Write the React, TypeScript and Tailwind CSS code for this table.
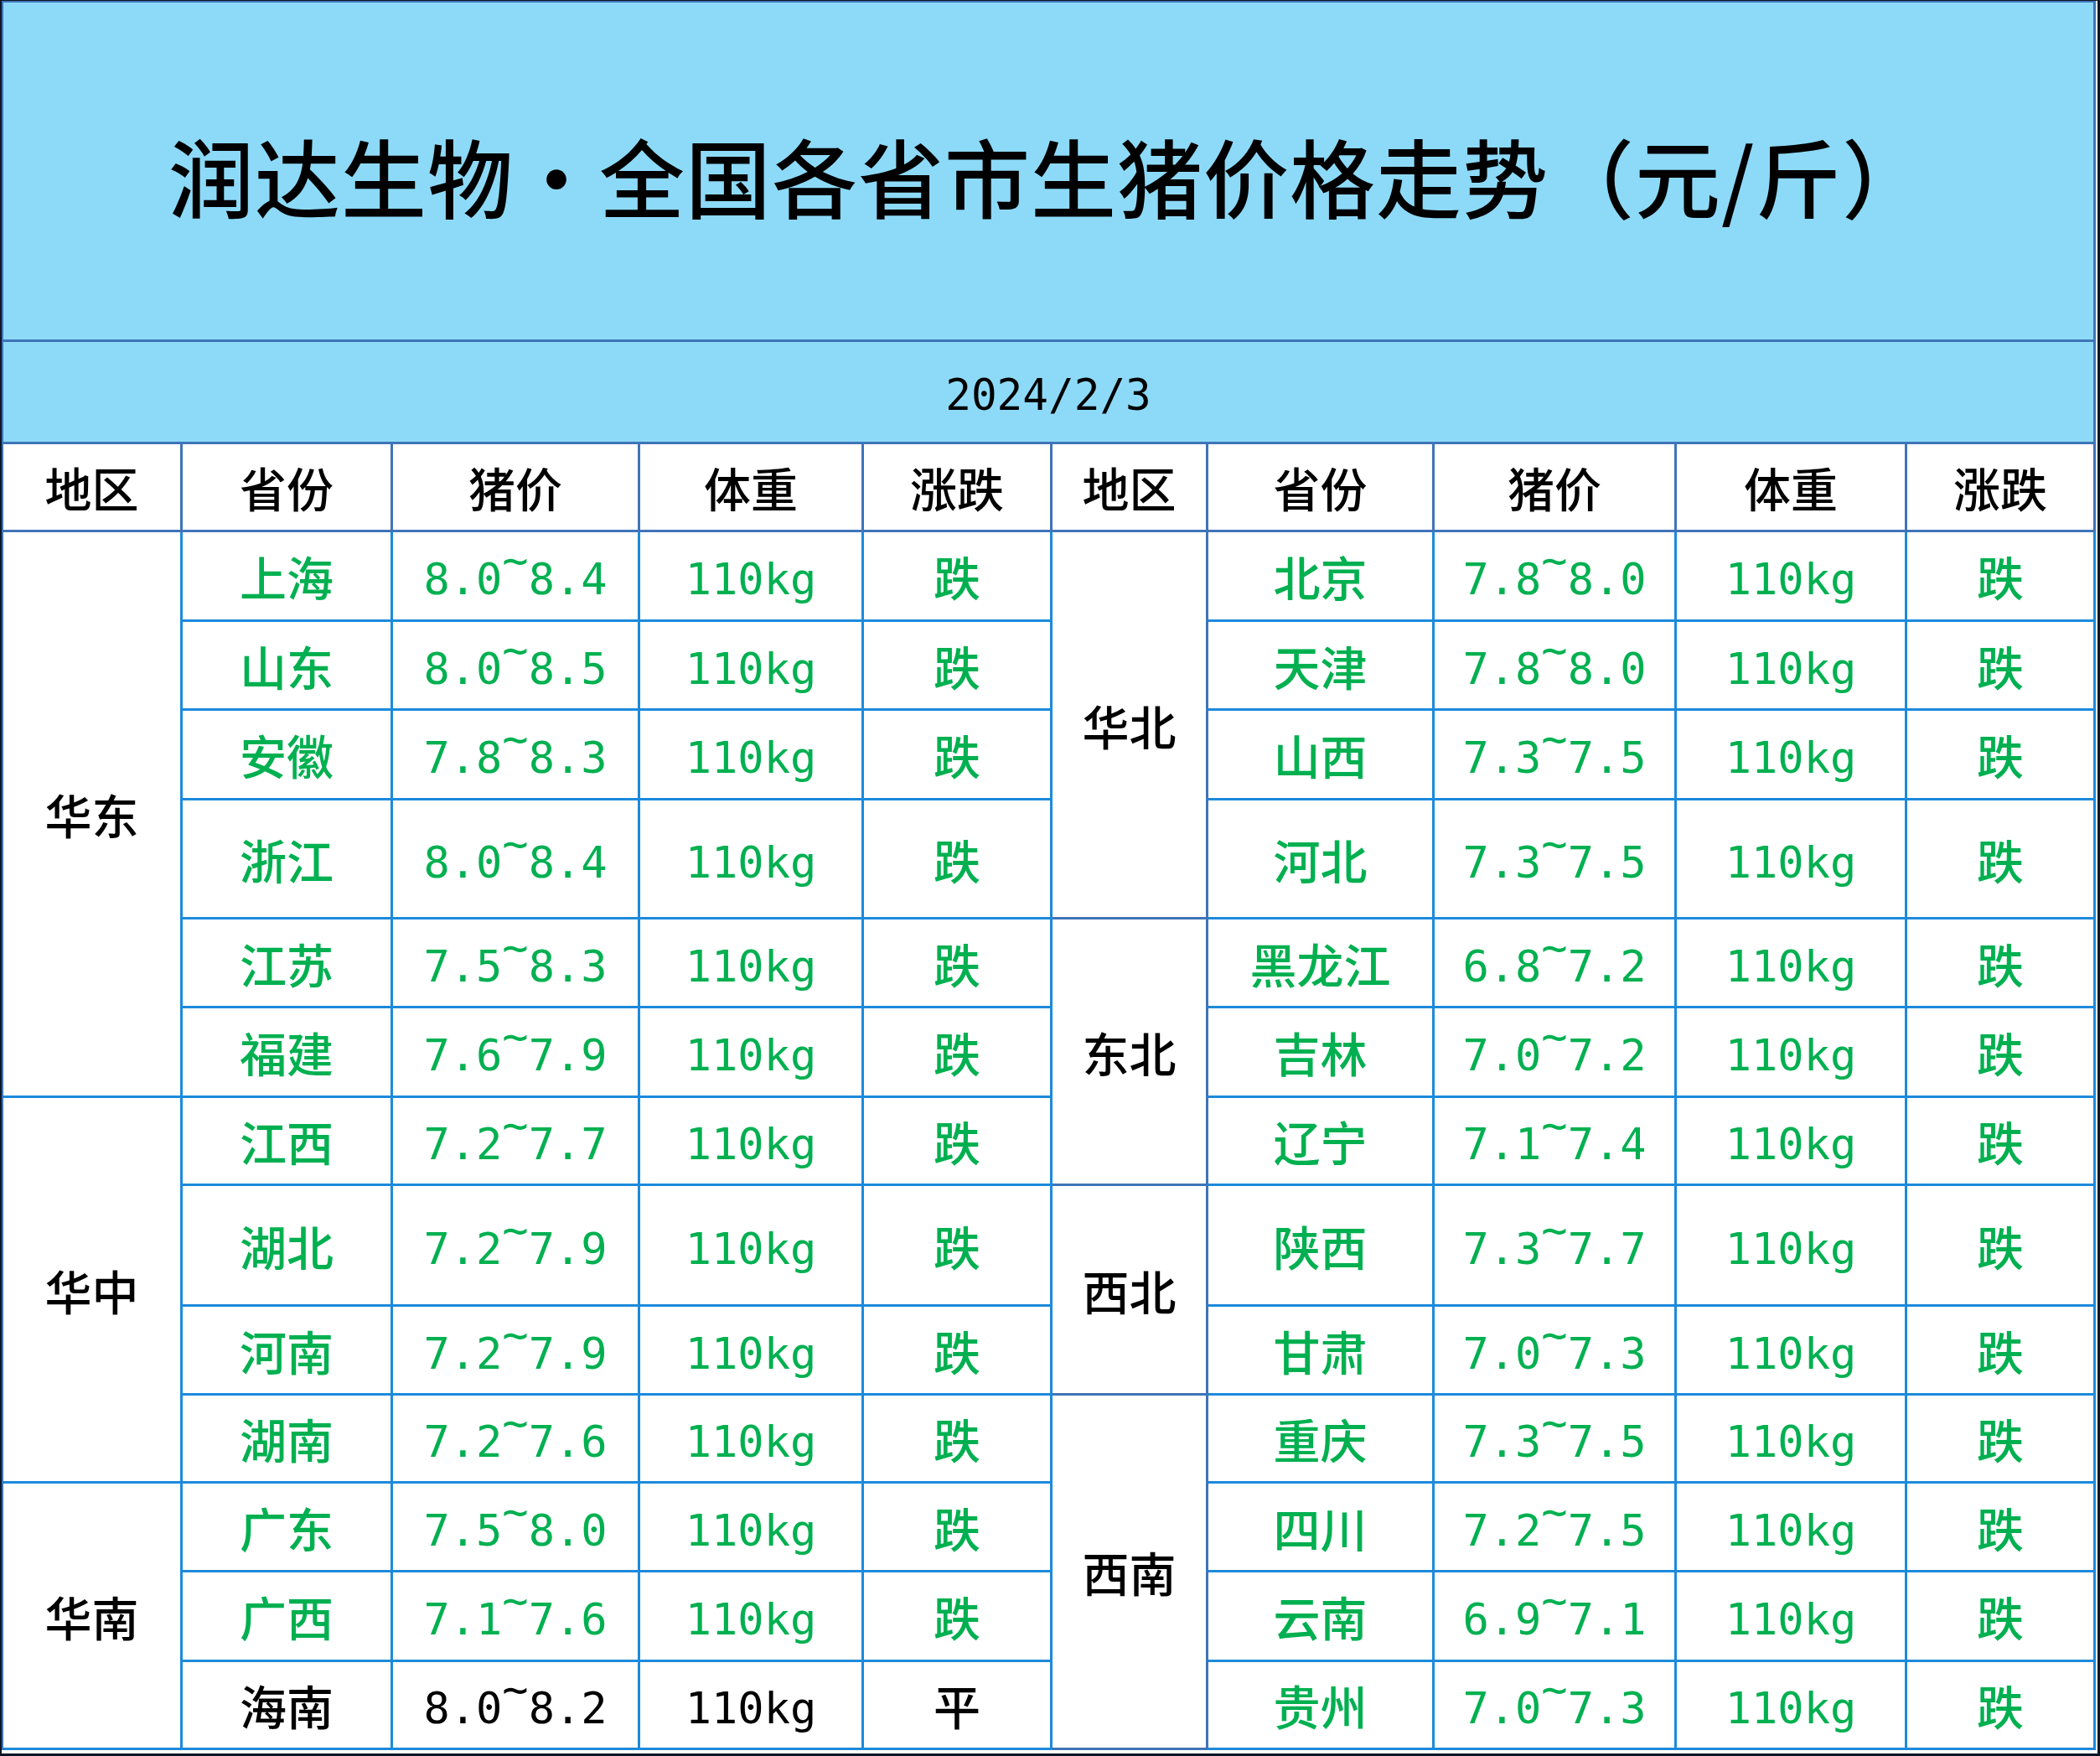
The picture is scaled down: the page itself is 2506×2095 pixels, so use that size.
import React from "react";

type Prov = { name: string; price: string; trend: string; black?: boolean };
type Region = { name: string; provs: Prov[] };

const left: Region[] = [
  {
    name: "华东",
    provs: [
      { name: "上海", price: "8.0~8.4", trend: "跌" },
      { name: "山东", price: "8.0~8.5", trend: "跌" },
      { name: "安徽", price: "7.8~8.3", trend: "跌" },
      { name: "浙江", price: "8.0~8.4", trend: "跌" },
      { name: "江苏", price: "7.5~8.3", trend: "跌" },
      { name: "福建", price: "7.6~7.9", trend: "跌" },
    ],
  },
  {
    name: "华中",
    provs: [
      { name: "江西", price: "7.2~7.7", trend: "跌" },
      { name: "湖北", price: "7.2~7.9", trend: "跌" },
      { name: "河南", price: "7.2~7.9", trend: "跌" },
      { name: "湖南", price: "7.2~7.6", trend: "跌" },
    ],
  },
  {
    name: "华南",
    provs: [
      { name: "广东", price: "7.5~8.0", trend: "跌" },
      { name: "广西", price: "7.1~7.6", trend: "跌" },
      { name: "海南", price: "8.0~8.2", trend: "平", black: true },
    ],
  },
];

const right: Region[] = [
  {
    name: "华北",
    provs: [
      { name: "北京", price: "7.8~8.0", trend: "跌" },
      { name: "天津", price: "7.8~8.0", trend: "跌" },
      { name: "山西", price: "7.3~7.5", trend: "跌" },
      { name: "河北", price: "7.3~7.5", trend: "跌" },
    ],
  },
  {
    name: "东北",
    provs: [
      { name: "黑龙江", price: "6.8~7.2", trend: "跌" },
      { name: "吉林", price: "7.0~7.2", trend: "跌" },
      { name: "辽宁", price: "7.1~7.4", trend: "跌" },
    ],
  },
  {
    name: "西北",
    provs: [
      { name: "陕西", price: "7.3~7.7", trend: "跌" },
      { name: "甘肃", price: "7.0~7.3", trend: "跌" },
    ],
  },
  {
    name: "西南",
    provs: [
      { name: "重庆", price: "7.3~7.5", trend: "跌" },
      { name: "四川", price: "7.2~7.5", trend: "跌" },
      { name: "云南", price: "6.9~7.1", trend: "跌" },
      { name: "贵州", price: "7.0~7.3", trend: "跌" },
    ],
  },
];

const SPAN: Record<number, string> = {
  2: "row-span-2",
  3: "row-span-3",
  4: "row-span-4",
  6: "row-span-6",
};

const CJK = "font-['Noto_Sans_CJK_SC','Noto_Sans',sans-serif]";
const MONO = "font-['DejaVu_Sans_Mono','Liberation_Mono',monospace]";

const dataCell =
  "flex items-center justify-center border-r-[3px] border-b-[3px] border-[#1c8adb] bg-white leading-none";
const monoCell =
  "flex items-center justify-center border-r-[3px] border-b-[3px] border-[#1c8adb] bg-white leading-none pt-[8px]";
const headCell =
  "flex items-center justify-center border-r-[3px] border-b-[3px] border-[#3f74b8] bg-white leading-none";

function flatten(regions: Region[]) {
  const rows: { region?: Region; prov: Prov }[] = [];
  regions.forEach((r) => {
    r.provs.forEach((p, i) => rows.push({ region: i === 0 ? r : undefined, prov: p }));
  });
  return rows;
}

function Price({ text, black }: { text: string; black?: boolean }) {
  const [a, b] = text.split("~");
  return (
    <span className={`${MONO} text-[52px] leading-none ${black ? "text-black" : "text-[#00b050]"}`}>
      {a}
      <span className="relative -top-[23px]">~</span>
      {b}
    </span>
  );
}

function ProvCells({ prov }: { prov: Prov }) {
  const color = prov.black ? "text-black" : "text-[#00b050]";
  return (
    <>
      <div className={dataCell}>
        <span className={`${CJK} text-[56px] font-medium ${color}`}>{prov.name}</span>
      </div>
      <div className={monoCell}>
        <Price text={prov.price} black={prov.black} />
      </div>
      <div className={monoCell}>
        <span className={`${MONO} text-[52px] leading-none ${color}`}>110kg</span>
      </div>
      <div className={dataCell}>
        <span className={`${CJK} text-[56px] font-medium ${color}`}>{prov.trend}</span>
      </div>
    </>
  );
}

export default function App() {
  const L = flatten(left);
  const R = flatten(right);
  const headers = ["地区", "省份", "猪价", "体重", "涨跌", "地区", "省份", "猪价", "体重", "涨跌"];
  return (
    <div className="w-[2506px] h-[2095px] bg-white border-t-[1px] border-l-[2px] border-r-[3px] border-b-[3px] border-[#0d1626] pr-[2px] pb-[4px]">
      <div className="grid grid-cols-[214px_251px_295px_267px_225px_186px_270px_289px_275px_225px] grid-rows-[405px_122px_105px_107px_106px_107px_142px_106px_107px_105px_144px_106px_105px_106px_107px_105px] border-t-[2px] border-l-[2px] border-[#3f74b8]">
        <div className="col-span-10 flex items-center justify-center border-r-[3px] border-b-[3px] border-[#3f74b8] bg-[#8ddaf8] pt-[10px]">
          <h1 className={`${CJK} text-[102px] font-medium leading-none tracking-[1px] text-black`}>
            润达生物<span className="inline-block w-[1em] text-center">·</span>全国各省市生猪价格走势（元/斤）
          </h1>
        </div>
        <div className="col-span-10 flex items-center justify-center border-r-[3px] border-b-[3px] border-[#3f74b8] bg-[#8ddaf8] pt-[8px]">
          <span className={`${MONO} text-[51px] leading-none text-black`}>2024/2/3</span>
        </div>
        {headers.map((h, i) => (
          <div key={i} className={headCell}>
            <span className={`${CJK} text-[56px] font-medium text-black`}>{h}</span>
          </div>
        ))}
        {L.map((row, i) => (
          <React.Fragment key={i}>
            {row.region && (
              <div className={`${dataCell} ${SPAN[row.region.provs.length]}`}>
                <span className={`${CJK} text-[56px] font-medium text-black`}>{row.region.name}</span>
              </div>
            )}
            <ProvCells prov={row.prov} />
            {R[i].region && (
              <div
                className={`${SPAN[R[i].region!.provs.length]} flex items-center justify-center border-r-[3px] border-b-[3px] border-[#3f74b8] bg-white leading-none`}
              >
                <span className={`${CJK} text-[56px] font-medium text-black`}>{R[i].region!.name}</span>
              </div>
            )}
            <ProvCells prov={R[i].prov} />
          </React.Fragment>
        ))}
      </div>
    </div>
  );
}
